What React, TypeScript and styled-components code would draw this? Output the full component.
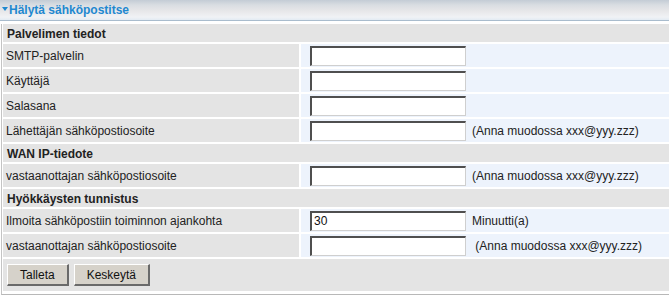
import styled, { createGlobalStyle } from "styled-components";

type Field = {
  label: string;
  value?: string;
  note?: string;
};

type Section = {
  title: string;
  fields: Field[];
};

const EMAIL_NOTE = "(Anna muodossa xxx@yyy.zzz)";

const sections: Section[] = [
  {
    title: "Palvelimen tiedot",
    fields: [
      { label: "SMTP-palvelin" },
      { label: "Käyttäjä" },
      { label: "Salasana" },
      { label: "Lähettäjän sähköpostiosoite", note: EMAIL_NOTE },
    ],
  },
  {
    title: "WAN IP-tiedote",
    fields: [{ label: "vastaanottajan sähköpostiosoite", note: EMAIL_NOTE }],
  },
  {
    title: "Hyökkäysten tunnistus",
    fields: [
      {
        label: "Ilmoita sähköpostiin toiminnon ajankohta",
        value: "30",
        note: "Minuutti(a)",
      },
      { label: "vastaanottajan sähköpostiosoite", note: "\u00a0" + EMAIL_NOTE },
    ],
  },
];

export default function App() {
  return (
    <>
      <GlobalStyle />
      <Panel>
        <TitleBar>
          <svg width="6" height="5" viewBox="0 0 6 5">
            <path d="M0 0 H6 L3 4 Z" fill="#1e88d0" />
          </svg>
          Hälytä sähköpostitse
        </TitleBar>
        <FormBox>
          {sections.map((section) => (
            <Group key={section.title}>
              <SectionHeader>{section.title}</SectionHeader>
              {section.fields.map((field, i) => (
                <Row key={section.title + i}>
                  <LabelCell>{field.label}</LabelCell>
                  <InputCell>
                    <TextInput type="text" defaultValue={field.value ?? ""} />
                    {field.note && <Note>{field.note}</Note>}
                  </InputCell>
                </Row>
              ))}
            </Group>
          ))}
          <ButtonBar>
            <Button type="button">Talleta</Button>
            <Button type="button">Keskeytä</Button>
          </ButtonBar>
        </FormBox>
      </Panel>
    </>
  );
}

const GlobalStyle = createGlobalStyle`
  html, body {
    margin: 0;
    padding: 0;
    background: #ffffff;
    overflow: hidden;
  }
  body {
    font-family: "Liberation Sans", Arial, sans-serif;
    font-size: 12px;
    color: #222222;
  }
`;

const Panel = styled.div`
  width: 690px;
`;

const TitleBar = styled.div`
  display: flex;
  align-items: center;
  gap: 1px;
  height: 21px;
  padding-left: 2px;
  padding-bottom: 1px;
  box-sizing: border-box;
  border-bottom: 1px solid #a9bccd;
  background: linear-gradient(
    #c3ccd5 0%,
    #d9dde2 25%,
    #e7e7e9 55%,
    #f0f2f5 85%,
    #e3ebf3 100%
  );
  color: #1e88d0;
  font-weight: bold;
  font-size: 12px;

  svg {
    margin-top: -1px;
  }
`;

const FormBox = styled.div`
  display: flex;
  flex-direction: column;
  gap: 2px;
  margin: 3px 0 0 1px;
  padding: 0 0 3px 1px;
  border-left: 1px solid #c4c4c4;
  border-bottom: 1px solid #b8b8b8;
`;

const Group = styled.div`
  display: flex;
  flex-direction: column;
  gap: 2px;
`;

const SectionHeader = styled.div`
  height: 18px;
  display: flex;
  align-items: center;
  padding-left: 4px;
  padding-top: 1px;
  box-sizing: border-box;
  background: #e4e4e4;
  font-weight: bold;
`;

const Row = styled.div`
  display: grid;
  grid-template-columns: 296px 1fr;
  gap: 2px;
  height: 23px;
`;

const LabelCell = styled.div`
  display: flex;
  align-items: center;
  padding-left: 3px;
  padding-top: 1px;
  box-sizing: border-box;
  background: #e4e4e4;
`;

const InputCell = styled.div`
  display: flex;
  align-items: center;
  padding-left: 9px;
  background: #edf3fc;
`;

const TextInput = styled.input`
  box-sizing: border-box;
  width: 156px;
  height: 20px;
  margin: 0;
  padding: 0 2px;
  border-style: solid;
  border-width: 2px 1px 1px 2px;
  border-color: #4f4f4f #cfcfcf #cfcfcf #4f4f4f;
  background: #ffffff;
  font-family: "Liberation Sans", Arial, sans-serif;
  font-size: 12px;
  color: #111111;
  outline: none;
`;

const Note = styled.span`
  margin-left: 6px;
  white-space: pre;
`;

const ButtonBar = styled.div`
  display: flex;
  align-items: center;
  gap: 5px;
  height: 32px;
  padding-left: 4px;
  background: #e4e4e4;
`;

const Button = styled.button`
  height: 22px;
  margin: 0;
  padding: 0 12px;
  border-style: solid;
  border-width: 1px 2px 2px 1px;
  border-color: #ffffff #6a6a6a #6a6a6a #ffffff;
  background: #d6d2ca;
  font-family: "Liberation Sans", Arial, sans-serif;
  font-size: 12px;
  color: #111111;
  cursor: pointer;
`;
